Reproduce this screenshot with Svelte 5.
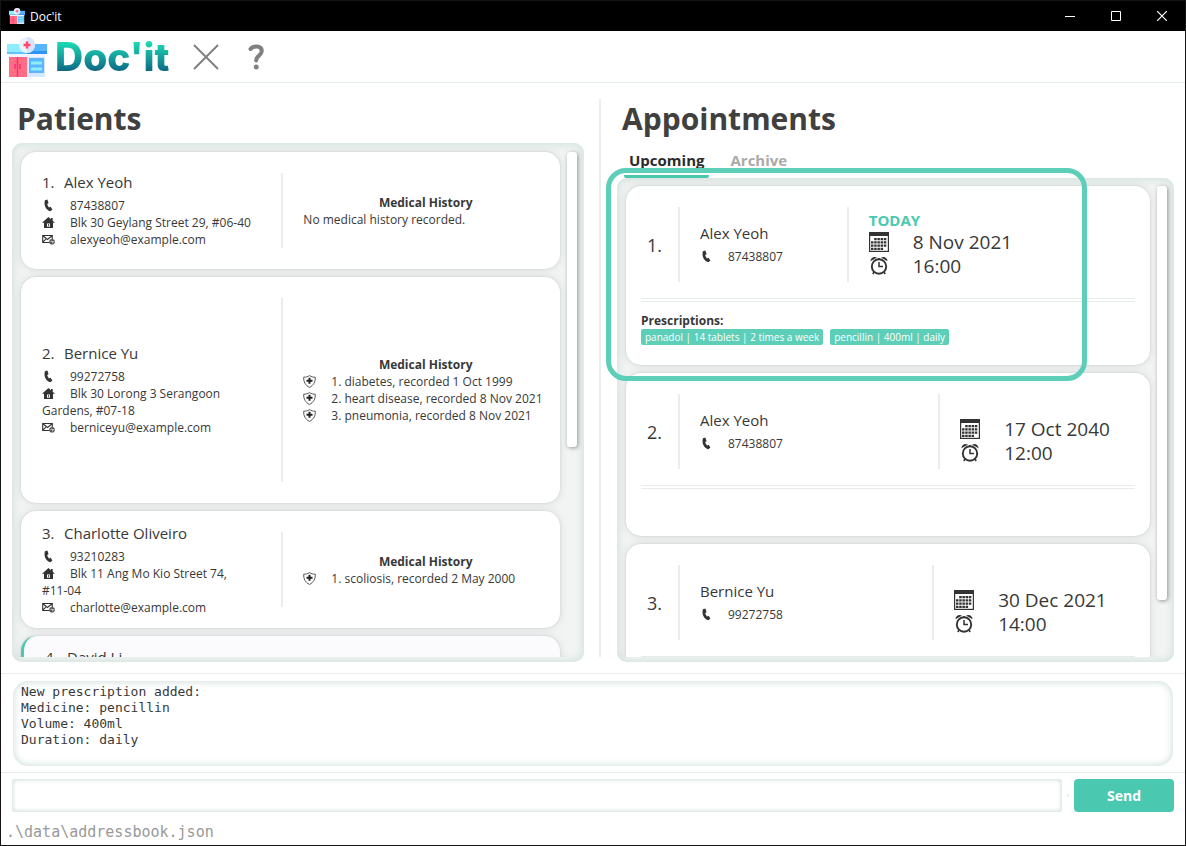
<script>
  const patients = [
    {
      name: 'Alex Yeoh', phone: '87438807', street: 'Blk 30 Geylang Street 29,', unit: '#06-40',
      email: 'alexyeoh@example.com', history: []
    },
    {
      name: 'Bernice Yu', phone: '99272758', street: 'Blk 30 Lorong 3 Serangoon Gardens,', unit: '#07-18',
      email: 'berniceyu@example.com', tall: true,
      history: ['diabetes, recorded 1 Oct 1999', 'heart disease, recorded 8 Nov 2021', 'pneumonia, recorded 8 Nov 2021']
    },
    {
      name: 'Charlotte Oliveiro', phone: '93210283', street: 'Blk 11 Ang Mo Kio Street 74,', unit: '#11-04',
      email: 'charlotte@example.com', history: ['scoliosis, recorded 2 May 2000']
    }
  ];

  const appointments = [
    {
      name: 'Alex Yeoh', phone: '87438807', date: '8 Nov 2021', time: '16:00', today: true, split: [146, 265],
      prescriptions: ['panadol | 14 tablets | 2 times a week', 'pencillin | 400ml | daily']
    },
    { name: 'Alex Yeoh', phone: '87438807', date: '17 Oct 2040', time: '12:00', split: [237, 174], prescriptions: [] },
    { name: 'Bernice Yu', phone: '99272758', date: '30 Dec 2021', time: '14:00', split: [231, 180], prescriptions: [] }
  ];

  const result = `New prescription added:
Medicine: pencillin
Volume: 400ml
Duration: daily`;

  let command = $state('');
</script>

{#snippet clinic(size)}
  <svg class="clinic" width={size} height={size} viewBox="0 0 40 40" aria-hidden="true">
    <rect x="2" y="15" width="18" height="25" fill="#ff6d85" />
    <rect x="20" y="15" width="18" height="25" fill="#d6e8ff" />
    <rect x="2" y="17" width="36" height="3" fill="#eef4ff" />
    <rect x="0" y="7" width="20" height="10" fill="#8fecff" />
    <rect x="20" y="7" width="20" height="10" fill="#56b5ff" />
    <path d="M0 15h20v2H0z" fill="#64c3ff" />
    <path d="M20 14h20v3H20z" fill="#2e93f4" />
    <path d="M10.500 20v20" stroke="#f32f78" stroke-width="1.500" />
    <path d="M8 27v5M13 27v5" stroke="#f32f78" stroke-width="1.500" />
    <rect x="22" y="21" width="15" height="15" fill="#5cb6ff" />
    <path d="M24 26h11M24 32h11" stroke="#8fecff" stroke-width="3" />
    <circle cx="20" cy="8" r="8" fill="#eaf1ff" />
    <path d="M20 0a8 8 0 0 1 0 16z" fill="#d6e4fb" />
    <path d="M20 4.500v7M16.500 8h7" stroke="#ff4a6c" stroke-width="2.500" />
  </svg>
{/snippet}

{#snippet phoneIcon()}
  <svg class="icon" viewBox="0 0 13 13" aria-hidden="true">
    <path d="M2.900 1.200 5.400.6l1.200 3.600-1.400.9c.3 1.200.8 2.400 1.800 3.300l1.600-.6 1.800 2.700-2 1.700C4.100 11.300 1.500 6.300 2.900 1.200z" fill="#333" />
  </svg>
{/snippet}

{#snippet homeIcon()}
  <svg class="icon" viewBox="0 0 13 13" aria-hidden="true">
    <path d="M6.500 1 0 6.700h2v5.300h9V6.700h2L10.700 4.700V2H9v1.200zM5 7.500h3v3.300H5z" fill="#333" fill-rule="evenodd" />
    <path d="M6.200 8h.9v2.200h-.9z" fill="#333" />
  </svg>
{/snippet}

{#snippet mailIcon()}
  <svg class="icon" viewBox="0 0 13 13" aria-hidden="true">
    <path d="M7.500 9.500H.7v-7h9.600v3.500M.9 2.800l4.600 3.700 4.600-3.700M.9 9.200l2.900-3" fill="none" stroke="#333" stroke-width="1.100" />
    <circle cx="10" cy="8.700" r="2.800" fill="#555" />
    <path d="M8.500 8.400c1-.8 2 .9 3.200 0M10 10l1.200-.4" fill="none" stroke="#fff" stroke-width=".8" />
  </svg>
{/snippet}

{#snippet shieldIcon()}
  <svg class="icon" viewBox="0 0 13 13" aria-hidden="true">
    <path d="M6.500.6C4.800 1.800 2.800 2.200.7 2.200c-.2 4.600 1.600 8.200 5.800 10.200 4.200-2 6-5.600 5.800-10.200-2.100 0-4.100-.4-5.800-1.600z" fill="#fff" stroke="#444" stroke-width=".9" />
    <path d="M6.500 2.700v6M3.500 5.700h6" stroke="#222" stroke-width="2" />
  </svg>
{/snippet}

{#snippet calendarIcon()}
  <svg class="icon-lg" viewBox="0 0 20 20" aria-hidden="true">
    <rect x=".6" y=".6" width="18.800" height="18.800" fill="#fff" stroke="#333" stroke-width="1.200" />
    <path d="M0 0h20v4H0z" fill="#333" />
    <path d="M5.200 7.200H18M2 10.400h16M2 13.600h16M2 16.800h12.600" stroke="#333" stroke-width="2.200" stroke-dasharray="2.500 .7" />
  </svg>
{/snippet}

{#snippet clockIcon()}
  <svg class="icon-lg" viewBox="0 0 20 20" aria-hidden="true">
    <circle cx="10" cy="10.500" r="7.200" fill="none" stroke="#333" stroke-width="1.900" />
    <path d="M10 6v4.500h4" fill="none" stroke="#333" stroke-width="1.500" />
    <path d="M1.500 5.300C1.300 2 4.700-.1 8 1.500zM18.500 5.300C18.700 2 15.300-.1 12 1.500z" fill="#333" />
    <path d="M5 16 3.800 18M15 16l1.200 2M10 2v1.500" stroke="#333" stroke-width="1.500" />
  </svg>
{/snippet}

<div class="window">
  <header class="titlebar">
    {@render clinic(16)}
    <span class="caption">Doc'it</span>
    <div class="controls">
      <button aria-label="Minimize"><svg width="10" height="10"><path d="M0 5.500h10" stroke="#fff" /></svg></button>
      <button aria-label="Maximize"><svg width="10" height="10"><path d="M.5.5h9v9h-9z" fill="none" stroke="#fff" /></svg></button>
      <button aria-label="Close"><svg width="10" height="10"><path d="M0 0l10 10M10 0 0 10" stroke="#fff" stroke-width="1.200" /></svg></button>
    </div>
  </header>

  <nav class="toolbar">
    {@render clinic(40)}
    <span class="brand">Doc'it</span>
    <button class="tool" aria-label="Exit">
      <svg width="26" height="26"><path d="M1 1l24 24M25 1 1 25" stroke="#808080" stroke-width="2" /></svg>
    </button>
    <button class="tool" aria-label="Help">
      <svg width="26" height="26" viewBox="0 0 26 26">
        <path d="M7.500 5c3-3.600 11.300-3.500 11.300 2 0 4.500-5.600 4.500-5.600 9.500" fill="none" stroke="#808080" stroke-width="4" stroke-linecap="round" stroke-linejoin="round" />
        <circle cx="13.200" cy="23" r="2.500" fill="#808080" />
      </svg>
    </button>
  </nav>

  <main class="panes">
    <section class="pane patients">
      <h1>Patients</h1>
      <div class="list">
        <div class="cards">
          {#each patients as p, i}
            <article class="card patient" class:tall={p.tall}>
              <div class="person">
                <h2><span class="index">{i + 1}.</span>{p.name}</h2>
                <p>{@render phoneIcon()}{p.phone}</p>
                <p>{@render homeIcon()}{p.street} <span class="unit">{p.unit}</span></p>
                <p>{@render mailIcon()}{p.email}</p>
              </div>
              <div class="history">
                <h3>Medical History</h3>
                {#each p.history as h, n}
                  <p>{@render shieldIcon()}{n + 1}. {h}</p>
                {:else}
                  <p>No medical history recorded.</p>
                {/each}
              </div>
            </article>
          {/each}
          <article class="card patient selected">
            <div class="person"><h2><span class="index">4.</span>David Li</h2></div>
          </article>
        </div>
        <div class="track"><div class="thumb" style:height="58.4%"></div></div>
      </div>
    </section>

    <div class="splitter"></div>

    <section class="pane appointments">
      <h1>Appointments</h1>
      <div class="tabs">
        <button class="tab active">Upcoming</button>
        <button class="tab">Archive</button>
      </div>
      <div class="list">
        <div class="cards">
          {#each appointments as a, i}
            <article class="card appointment">
              <div class="summary">
                <div class="number">{i + 1}.</div>
                <div class="who" style:flex-grow={a.split[0]}>
                  <h2>{a.name}</h2>
                  <p>{@render phoneIcon()}{a.phone}</p>
                </div>
                <div class="when" style:flex-grow={a.split[1]}>
                  <strong>{a.today ? 'TODAY' : ''}</strong>
                  <p>{@render calendarIcon()}{a.date}</p>
                  <p>{@render clockIcon()}{a.time}</p>
                </div>
              </div>
              <div class="rule"></div>
              {#if a.prescriptions.length}
                <h3>Prescriptions:</h3>
                <div class="tags">
                  {#each a.prescriptions as tag}<span class="tag">{tag}</span>{/each}
                </div>
              {/if}
            </article>
          {/each}
        </div>
        <div class="track"><div class="thumb" style:height="88%"></div></div>
      </div>
      <div class="highlight"></div>
    </section>
  </main>

  <section class="output"><pre>{result}</pre></section>

  <form class="command" onsubmit={(e) => e.preventDefault()}>
    <input type="text" aria-label="Command" bind:value={command} />
    <span class="grip"></span>
    <button class="send">Send</button>
  </form>

  <footer>.\data\addressbook.json</footer>
</div>

<style>
  :global(body) { margin: 0; }
  * { box-sizing: border-box; }
  h1, h2, h3, p, pre { margin: 0; }
  button { border: 0; padding: 0; background: none; font: inherit; color: inherit; }

  .window {
    display: flex;
    flex-direction: column;
    height: 100vh;
    border: 1px solid #141414;
    background: #fff;
    color: #383838;
    font: 12px/17px "Open Sans", "Noto Sans", sans-serif;
    overflow: hidden;
  }

  .clinic { display: block; flex: none; }

  .titlebar {
    flex: none;
    display: flex;
    align-items: center;
    height: 30px;
    padding-left: 8px;
    background: #000;
    color: #fff;
  }
  .caption { margin-left: 5px; }
  .controls { display: flex; margin-left: auto; height: 100%; }
  .controls button { display: grid; place-items: center; width: 46px; }

  .toolbar {
    flex: none;
    display: flex;
    align-items: center;
    height: 52px;
    padding-left: 6px;
    border-bottom: 1px solid #e4ecea;
  }
  .brand {
    width: 130px;
    margin-right: 16px;
    padding-left: 8px;
    font: 800 39px/50px Inter, sans-serif;
    background: linear-gradient(#1bd8b2 22%, #0d5c80 84%);
    -webkit-background-clip: text;
    background-clip: text;
    color: transparent;
  }
  .tool { display: grid; place-items: center; width: 26px; margin-right: 24px; }

  .panes {
    flex: 1;
    min-height: 0;
    display: grid;
    grid-template-columns: 598fr 2px 584fr;
  }
  .pane { position: relative; display: flex; flex-direction: column; min-width: 0; min-height: 0; padding-bottom: 11px; }
  .patients { padding-left: 11px; padding-right: 15px; }
  .appointments { padding-left: 16px; padding-right: 11px; }
  .splitter { margin: 16px 0; background: #e8eeec; }

  h1 {
    flex: none;
    height: 60px;
    padding: 12px 5px 0;
    font-size: 30px;
    line-height: 48px;
    font-weight: 700;
    color: #404040;
  }

  .list {
    flex: 1;
    min-height: 0;
    display: flex;
    padding: 0 7px 5px 0;
    border-radius: 10px;
    background: #f1f4f3;
    box-shadow: inset 0 0 9px 1px #cfdfd9;
  }
  .cards {
    flex: 1;
    min-width: 0;
    display: flex;
    flex-direction: column;
    gap: 8px;
    overflow: hidden;
    padding: 8px 7px 0 9px;
  }
  .track { flex: none; width: 10px; padding-top: 8px; }
  .patients .cards, .patients .track { padding-top: 9px; }
  .thumb { border-radius: 3px; background: #fff; box-shadow: 1px 1px 4px rgba(0, 0, 0, .4); }

  .card {
    flex: none;
    border-radius: 15px;
    background: #fff;
    box-shadow: 0 0 2px rgba(60, 90, 80, .2), 0 0 10px rgba(0, 0, 0, .1);
  }

  .patient { display: flex; align-items: center; height: 117px; padding: 21px 12px 21px 21px; }
  .patient.tall { height: 226px; }
  .patient.selected { align-items: flex-start; padding: 12px 21px; border-left: 3px solid #4bc9b0; background: #fbfbfd; }
  .person { flex: 1; min-width: 0; padding-right: 20px; }
  .unit { white-space: nowrap; }
  .history {
    flex: 0 0 52.7%;
    height: 100%;
    display: flex;
    flex-direction: column;
    justify-content: center;
    padding-left: 20px;
    border-left: 2px solid #e8eeec;
    white-space: nowrap;
  }
  h2 { font-size: 15px; line-height: 18px; padding-bottom: 6px; font-weight: 400; }
  .index { display: inline-block; width: 22px; }
  h3 { font-size: 12px; line-height: 17px; font-weight: 700; }
  .history h3 { text-align: center; }
  .icon { width: 13px; height: 13px; margin-right: 15px; vertical-align: -2px; }

  .tabs { flex: none; display: flex; height: 35px; padding-left: 7px; gap: 16px; }
  .tab {
    height: 35px;
    padding: 2px 5px 0;
    border-bottom: 3px solid transparent;
    border-radius: 2px;
    font-size: 15px;
    font-weight: 700;
    color: #aaa;
  }
  .tab.active { border-color: #4bc9b0; color: #2b2b2b; }

  .appointment { min-height: 163px; padding: 21px 15px 20px; }
  .summary { display: flex; height: 75px; }
  .number { flex: none; width: 37px; padding-left: 6px; font-size: 18px; line-height: 76px; }
  .who, .when {
    flex: 1 1 0;
    display: flex;
    flex-direction: column;
    justify-content: center;
    padding-left: 20px;
    border-left: 2px solid #e8eeec;
    white-space: nowrap;
  }
  .when { padding-bottom: 2px; font-size: 19px; line-height: 24px; }
  .when p { display: flex; align-items: center; gap: 24px; }
  .when strong { height: 20px; font-size: 15px; line-height: 20px; color: #4bc9b0; }
  .icon-lg { width: 20px; height: 20px; }
  .rule { height: 4px; margin: 16px 0 10px; border: solid #e6ecea; border-width: 1px 0; }
  .tags { display: flex; gap: 7px; }
  .tag { height: 16px; padding: 0 4px; border-radius: 2px; background: #5dcfb8; color: #fff; font-size: 10px; line-height: 16px; }

  .highlight {
    position: absolute;
    top: 85px;
    left: 5px;
    width: 481px;
    height: 213px;
    border: 5px solid #5dcfb8;
    border-radius: 20px;
  }

  .output { flex: none; padding: 7px 12px 6px; border-top: 1px solid #e8ecea; border-bottom: 1px solid #e4ecea; }
  pre {
    height: 85px;
    padding: 3px 8px;
    border-radius: 15px;
    box-shadow: inset 0 0 7px 1px #cfdfd9;
    font: 13px/16px "DejaVu Sans Mono", monospace;
  }

  .command { flex: none; display: flex; align-items: center; padding: 6px 11px 0; }
  input {
    flex: 1;
    min-width: 0;
    height: 33px;
    padding: 0 8px;
    border: 0;
    border-radius: 3px;
    background: #fff;
    box-shadow: inset 0 0 4px 1px #cfdfd9;
    font: 13px/16px "DejaVu Sans Mono", monospace;
    outline: 0;
  }
  .grip { width: 2px; height: 3px; margin: 0 5px; background: #e8eeec; }
  .send { width: 100px; height: 33px; border-radius: 4px; background: #4bc9b0; color: #fff; font-size: 14px; font-weight: 700; }

  footer { flex: none; height: 33px; padding-left: 5px; font: 15px/40px "DejaVu Sans Mono", monospace; color: #999; }
</style>
